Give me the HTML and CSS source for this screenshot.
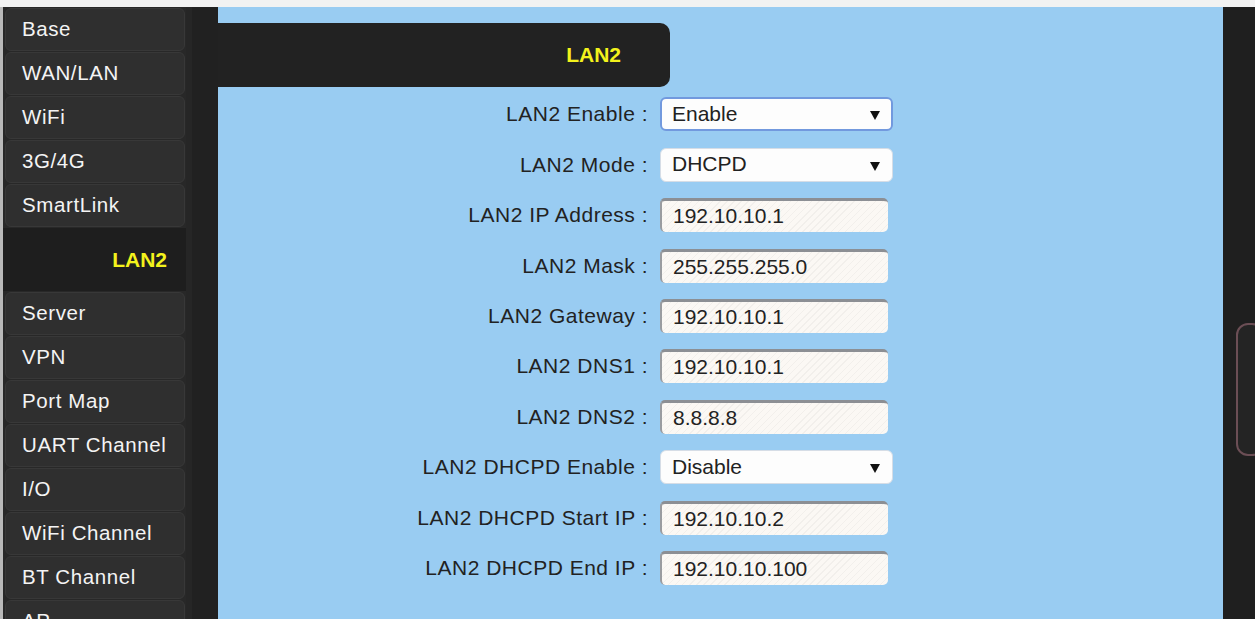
FILE: index.html
```html
<!DOCTYPE html>
<html lang="en">
<head>
<meta charset="utf-8">
<title>LAN2 Settings</title>
<link rel="stylesheet" href="styles.css">
</head>
<body>
<div class="page">
  <nav class="sidebar">
    <a class="nav-item">Base</a>
    <a class="nav-item">WAN/LAN</a>
    <a class="nav-item">WiFi</a>
    <a class="nav-item">3G/4G</a>
    <a class="nav-item">SmartLink</a>
    <a class="nav-item active">LAN2</a>
    <a class="nav-item">Server</a>
    <a class="nav-item">VPN</a>
    <a class="nav-item">Port Map</a>
    <a class="nav-item">UART Channel</a>
    <a class="nav-item">I/O</a>
    <a class="nav-item">WiFi Channel</a>
    <a class="nav-item">BT Channel</a>
    <a class="nav-item">AP</a>
  </nav>
  <div class="gutter"></div>
  <main class="panel">
    <div class="panel-title">LAN2</div>
    <form class="form">
      <label class="lbl">LAN2 Enable :</label>
      <div class="select-wrap"><select class="sel focused"><option>Enable</option><option>Disable</option></select></div>

      <label class="lbl">LAN2 Mode :</label>
      <div class="select-wrap"><select class="sel"><option>DHCPD</option><option>Static</option></select></div>

      <label class="lbl">LAN2 IP Address :</label>
      <input class="txt" type="text" value="192.10.10.1">

      <label class="lbl">LAN2 Mask :</label>
      <input class="txt" type="text" value="255.255.255.0">

      <label class="lbl">LAN2 Gateway :</label>
      <input class="txt" type="text" value="192.10.10.1">

      <label class="lbl">LAN2 DNS1 :</label>
      <input class="txt" type="text" value="192.10.10.1">

      <label class="lbl">LAN2 DNS2 :</label>
      <input class="txt" type="text" value="8.8.8.8">

      <label class="lbl">LAN2 DHCPD Enable :</label>
      <div class="select-wrap"><select class="sel"><option>Disable</option><option>Enable</option></select></div>

      <label class="lbl">LAN2 DHCPD Start IP :</label>
      <input class="txt" type="text" value="192.10.10.2">

      <label class="lbl">LAN2 DHCPD End IP :</label>
      <input class="txt" type="text" value="192.10.10.100">
    </form>
  </main>
  <div class="scroll-col"><div class="scroll-thumb"></div></div>
</div>
</body>
</html>
```

FILE: styles.css
```css
html, body {
  margin: 0;
  padding: 0;
  height: 100%;
  overflow: hidden;
}

body {
  background: #f2f2f2;
  font-family: "Liberation Sans", Arial, sans-serif;
}

.page {
  display: grid;
  grid-template-columns: 186px 32px 1005px 32px;
  margin-top: 7px;
  height: 612px;
}

/* left navigation */
.sidebar {
  background: #282828;
  border-left: 3px solid #b9b9b9;
  display: flex;
  flex-direction: column;
  padding-top: 1px;
  overflow: hidden;
}

.nav-item {
  box-sizing: border-box;
  flex: none;
  height: 43px;
  margin: 0 1px 1px 2px;
  padding: 0 0 1px 16px;
  display: flex;
  align-items: center;
  background: #2f2f2f;
  border: 1px solid #383838;
  border-radius: 6px;
  color: #f4f4f4;
  font-size: 20.5px;
  letter-spacing: 0.6px;
  white-space: nowrap;
  cursor: pointer;
}

.nav-item.active {
  height: 63px;
  margin: 0 0 1px -3px;
  padding: 0 19px 0 0;
  justify-content: flex-end;
  background: #1e1e1e;
  border: none;
  border-radius: 0;
  color: #f3f21c;
  font-weight: bold;
  font-size: 21px;
  letter-spacing: 0;
}

.gutter {
  background: #212121;
  border-left: 6px solid #262626;
}

/* main content */
.panel {
  background: #99ccf2;
  padding-top: 16px;
}

.panel-title {
  box-sizing: border-box;
  width: 452px;
  height: 64px;
  background: #222222;
  border-radius: 0 10px 10px 0;
  display: flex;
  align-items: center;
  justify-content: flex-end;
  padding-right: 49px;
  color: #f3f21c;
  font-weight: bold;
  font-size: 21px;
}

.form {
  display: grid;
  grid-template-columns: 430px 233px;
  grid-auto-rows: 50.45px;
  column-gap: 12px;
  align-items: center;
  margin-top: 2px;
}

.lbl {
  text-align: right;
  color: #222;
  font-size: 21px;
  letter-spacing: 0.5px;
  white-space: nowrap;
}

.select-wrap {
  position: relative;
  width: 233px;
  height: 34px;
}

.select-wrap::after {
  content: "";
  position: absolute;
  right: 13px;
  top: 14px;
  border-left: 5px solid transparent;
  border-right: 5px solid transparent;
  border-top: 9px solid #111;
  pointer-events: none;
}

.sel {
  appearance: none;
  -webkit-appearance: none;
  box-sizing: border-box;
  width: 100%;
  height: 100%;
  padding: 0 0 2px 11px;
  background: #fdfdfd;
  border: 1px solid #d6dde6;
  border-radius: 6px;
  font-family: inherit;
  font-size: 21px;
  color: #222;
  outline: none;
}

.sel.focused {
  border: 2px solid #7299de;
  padding-left: 10px;
}

.txt {
  box-sizing: border-box;
  width: 228px;
  height: 34px;
  padding: 0 0 1px 11px;
  border: none;
  border-top: 3px solid #8c8f94;
  border-left: 2px solid #9a9ca0;
  border-radius: 5px;
  background-color: #fbf8f4;
  background-image: repeating-linear-gradient(-45deg, rgba(0, 0, 0, 0.035) 0 1px, transparent 1px 5px);
  font-family: inherit;
  font-size: 21px;
  color: #222;
  outline: none;
}

/* right scroll column */
.scroll-col {
  background: #1f1f1f;
  padding-top: 316px;
  padding-left: 13px;
  overflow: hidden;
}

.scroll-thumb {
  box-sizing: border-box;
  width: 28px;
  height: 133px;
  border: 2px solid #6b4e55;
  border-radius: 12px;
  background: #242424;
}
```
